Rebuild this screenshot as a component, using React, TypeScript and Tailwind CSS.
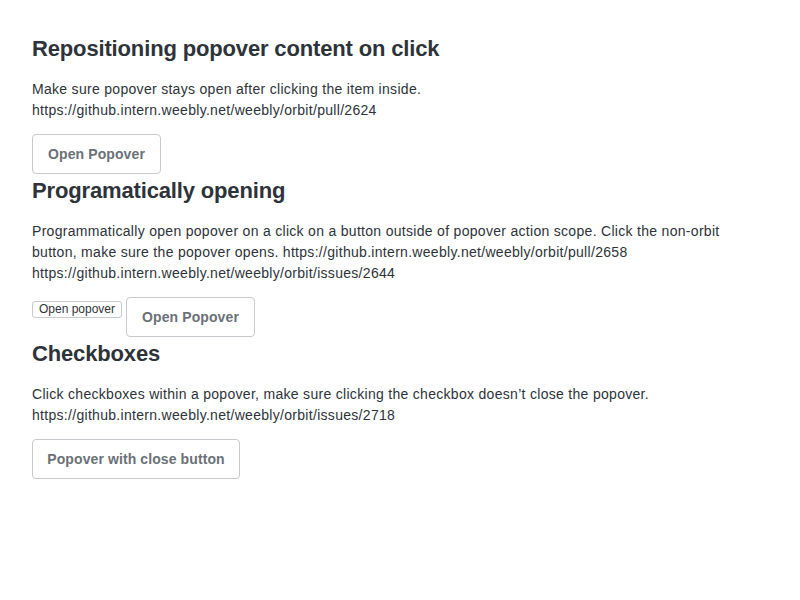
const font = { fontFamily: '"Liberation Sans", Arial, sans-serif' };

const BigButton = ({ text, w }: { text: string; w: string }) => (
  <button
    className={`h-[40px] ${w} rounded-[4px] border border-[#c6c9cd] bg-white text-[14px] font-semibold tracking-[0.1px] text-[#6b7177]`}
  >
    {text}
  </button>
);

const Section = ({ title, children, action }: any) => (
  <div>
    <h2 className="pt-[1px] text-[22px] leading-[32px] font-semibold tracking-[-0.15px] text-[#2d3339]">
      {title}
    </h2>
    <p className="mt-[14px] mb-[13px] text-[14px] leading-[21px] tracking-[0.3px] text-[#2d3339]">{children}</p>
    {action}
  </div>
);

export default function App() {
  return (
    <div className="w-[800px] h-[600px] bg-white px-[32px] pt-[32px]" style={font}>
      <Section
        title="Repositioning popover content on click"
        action={<BigButton text="Open Popover" w="w-[129px]" />}
      >
        Make sure popover stays open after clicking the item inside.
        <br />
        https://github.intern.weebly.net/weebly/orbit/pull/2624
      </Section>
      <Section
        title="Programatically opening"
        action={
          <div className="flex items-start gap-[4px]">
            <button className="mt-[4px] h-[17px] w-[90px] rounded-[3px] border border-[#c6c9cd] bg-white text-[12px] leading-[15px] text-[#2d3339]">
              Open popover
            </button>
            <BigButton text="Open Popover" w="w-[129px]" />
          </div>
        }
      >
        Programmatically open popover on a click on a button outside of popover action scope. Click the non-orbit
        button, make sure the popover opens. https://github.intern.weebly.net/weebly/orbit/pull/2658
        <br />
        https://github.intern.weebly.net/weebly/orbit/issues/2644
      </Section>
      <Section
        title="Checkboxes"
        action={<BigButton text="Popover with close button" w="w-[208px]" />}
      >
        Click checkboxes within a popover, make sure clicking the checkbox doesn’t close the popover.
        <br />
        https://github.intern.weebly.net/weebly/orbit/issues/2718
      </Section>
    </div>
  );
}
